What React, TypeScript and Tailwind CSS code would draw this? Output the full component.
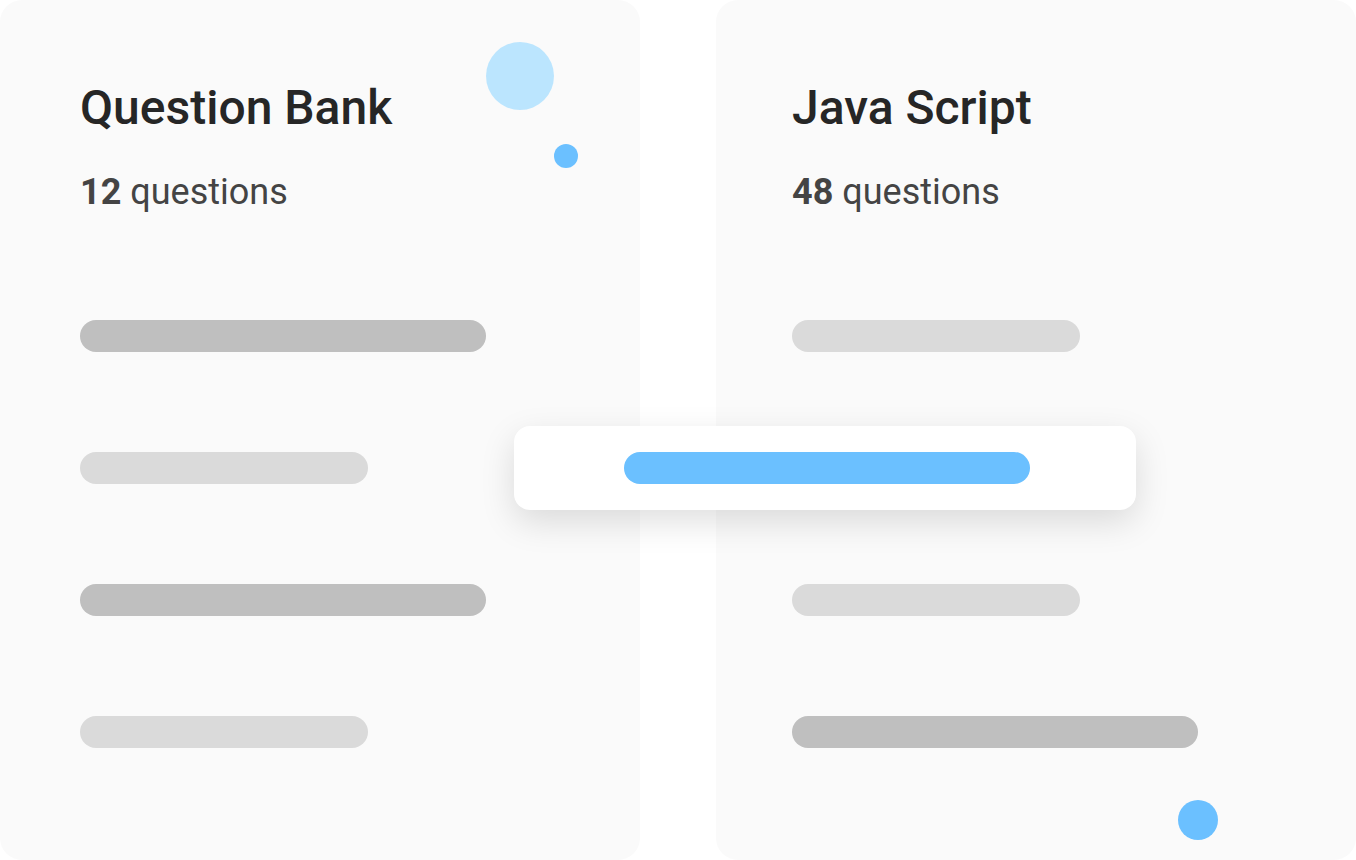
import React from "react";

const Bar = ({ w, dark }: { w: "long" | "short"; dark: boolean }) => (
  <div
    className={`h-[32px] rounded-full ${w === "long" ? "w-[406px]" : "w-[288px]"} ${
      dark ? "bg-[#bfbfbf]" : "bg-[#dadada]"
    }`}
  />
);

export default function App() {
  return (
    <div
      className="relative flex h-[860px] w-[1356px] gap-[76px] bg-white"
      style={{ fontFamily: "Roboto, 'Noto Sans', sans-serif" }}
    >
      {/* Left card */}
      <div className="relative flex h-[860px] w-[640px] flex-col rounded-[22px] bg-[#fafafa] pl-[80px] pt-[84px]">
        <div className="absolute left-[486px] top-[42px] h-[68px] w-[68px] rounded-full bg-[#bbe5fe]" />
        <div className="absolute left-[554px] top-[144px] h-[24px] w-[24px] rounded-full bg-[#6bc0ff]" />
        <h1 className="text-[48px] font-medium leading-[48px] text-[#262626]">Question Bank</h1>
        <p className="mt-[42px] text-[36px] leading-[36px] text-[#444444]">
          <span className="font-bold">12</span> questions
        </p>
        <div className="mt-[110px] flex flex-col gap-[100px]">
          <Bar w="long" dark />
          <Bar w="short" dark={false} />
          <Bar w="long" dark />
          <Bar w="short" dark={false} />
        </div>
      </div>

      {/* Right card */}
      <div className="relative flex h-[860px] w-[640px] flex-col rounded-[22px] bg-[#fafafa] pl-[76px] pt-[84px]">
        <h1 className="text-[48px] font-medium leading-[48px] text-[#262626]">Java Script</h1>
        <p className="mt-[42px] text-[36px] leading-[36px] text-[#444444]">
          <span className="font-bold">48</span> questions
        </p>
        <div className="mt-[110px] flex flex-col gap-[100px]">
          <Bar w="short" dark={false} />
          <Bar w="short" dark={false} />
          <Bar w="short" dark={false} />
          <Bar w="long" dark />
        </div>
        <div className="absolute left-[462px] top-[800px] h-[40px] w-[40px] rounded-full bg-[#6bc0ff]" />
      </div>

      {/* Floating dragged item */}
      <div className="absolute left-[514px] top-[426px] flex h-[84px] w-[622px] items-center rounded-[16px] bg-white pl-[110px] shadow-[0_12px_34px_rgba(0,0,0,0.13)]">
        <div className="h-[32px] w-[406px] rounded-full bg-[#6bc0ff]" />
      </div>
    </div>
  );
}
